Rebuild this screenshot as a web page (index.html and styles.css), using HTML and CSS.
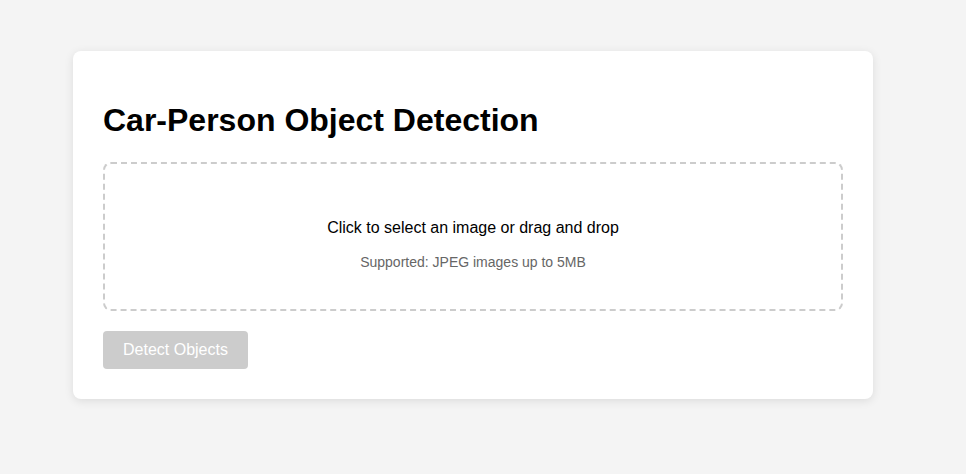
FILE: index.html
```html
<!DOCTYPE html>
<html lang="en">
<head>
<meta charset="utf-8">
<title>Car-Person Object Detection</title>
<link rel="stylesheet" href="styles.css">
</head>
<body>
<div class="page">
  <div class="card">
    <h1 class="title">Car-Person Object Detection</h1>
    <div class="upload-area">
      <p class="upload-main">Click to select an image or drag and drop</p>
      <p class="upload-note">Supported: JPEG images up to 5MB</p>
    </div>
    <button class="detect-btn" disabled>Detect Objects</button>
  </div>
</div>
</body>
</html>
```

FILE: styles.css
```css
html, body {
  margin: 0;
  padding: 0;
  background: #f4f4f4;
  font-family: "Liberation Sans", Arial, sans-serif;
}
.page {
  padding: 51px 0 40px 73px;
}
.card {
  box-sizing: border-box;
  width: 800px;
  background: #fff;
  border-radius: 8px;
  box-shadow: 0 2px 10px rgba(0, 0, 0, 0.1);
  padding: 30px;
}
.title {
  font-size: 32px;
  font-weight: bold;
  color: #000;
  margin: 21px 0 23px;
  line-height: 37px;
}
.upload-area {
  border: 2px dashed #ccc;
  border-radius: 8px;
  padding: 40px 20px 39px;
  text-align: center;
}
.upload-main {
  margin: 15px 0 0;
  font-size: 16px;
  line-height: 18px;
  color: #000;
}
.upload-note {
  margin: 17px 0 0;
  font-size: 14px;
  line-height: 16px;
  color: #666;
}
.detect-btn {
  display: block;
  margin-top: 20px;
  background: #ccc;
  color: #fff;
  border: none;
  border-radius: 4px;
  padding: 10px 20px;
  font-family: "Liberation Sans", Arial, sans-serif;
  font-size: 16px;
  line-height: 18px;
}
```
